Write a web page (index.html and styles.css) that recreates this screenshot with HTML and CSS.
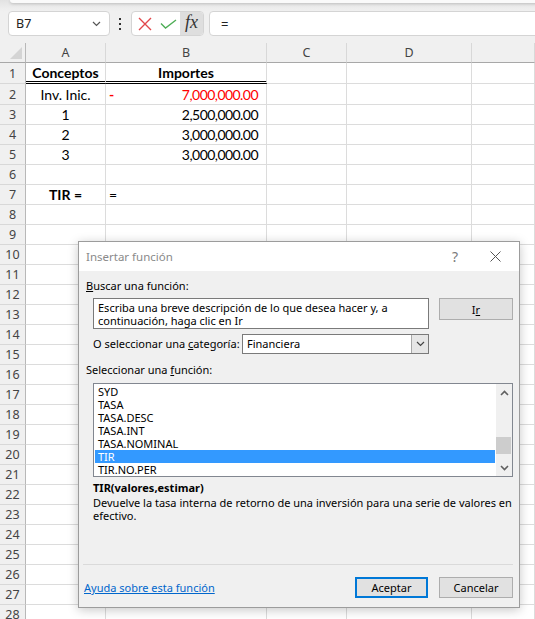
FILE: index.html
```html
<!DOCTYPE html>
<html lang="es">
<head>
<meta charset="utf-8">
<title>Insertar función</title>
<link rel="stylesheet" href="styles.css">
</head>
<body>
<div class="app">
  <div class="top">
    <div class="ribbon-edge"></div>
    <div class="fbar">
      <div class="namebox"><span>B7</span>
        <svg class="chev" width="9" height="6" viewBox="0 0 9 6"><path d="M1 1 L4.5 4.5 L8 1" fill="none" stroke="#555" stroke-width="1.2"/></svg>
      </div>
      <div class="dots"><i></i><i></i><i></i></div>
      <div class="fbtns">
        <span class="fb fb-x"><svg width="14" height="14" viewBox="0 0 14 14"><path d="M1 1 L13 13 M13 1 L1 13" stroke="#e2474b" stroke-width="1.4" fill="none"/></svg></span>
        <span class="fb fb-ok"><svg width="17" height="10" viewBox="0 0 17 10"><path d="M1 4.5 L5.5 9 L16 1" stroke="#4fae57" stroke-width="1.4" fill="none"/></svg></span>
        <span class="fb fb-fx">fx</span>
      </div>
      <div class="finput">=</div>
    </div>
  </div>

  <div class="grid">
    <div class="corner"><span class="tri"></span></div><div class="h">A</div><div class="h">B</div><div class="h">C</div><div class="h">D</div><div class="h"></div>

    <div class="n">1</div><div class="c ctr b dbl">Conceptos</div><div class="c ctr b dbl">Importes</div><div class="c"></div><div class="c"></div><div class="c"></div>
    <div class="n">2</div><div class="c ctr">Inv. Inic.</div><div class="c acct red"><span class="minus">-</span><span class="digits">7,000,000.00</span></div><div class="c"></div><div class="c"></div><div class="c"></div>
    <div class="n">3</div><div class="c ctr">1</div><div class="c num digits">2,500,000.00</div><div class="c"></div><div class="c"></div><div class="c"></div>
    <div class="n">4</div><div class="c ctr">2</div><div class="c num digits">3,000,000.00</div><div class="c"></div><div class="c"></div><div class="c"></div>
    <div class="n">5</div><div class="c ctr">3</div><div class="c num digits">3,000,000.00</div><div class="c"></div><div class="c"></div><div class="c"></div>
    <div class="n">6</div><div class="c"></div><div class="c"></div><div class="c"></div><div class="c"></div><div class="c"></div>
    <div class="n">7</div><div class="c ctr b">TIR =</div><div class="c lft">=</div><div class="c"></div><div class="c"></div><div class="c"></div>
    <div class="n">8</div><div class="c"></div><div class="c"></div><div class="c"></div><div class="c"></div><div class="c"></div>
    <div class="n">9</div><div class="c"></div><div class="c"></div><div class="c"></div><div class="c"></div><div class="c"></div>
    <div class="n">10</div><div class="c"></div><div class="c"></div><div class="c"></div><div class="c"></div><div class="c"></div>
    <div class="n">11</div><div class="c"></div><div class="c"></div><div class="c"></div><div class="c"></div><div class="c"></div>
    <div class="n">12</div><div class="c"></div><div class="c"></div><div class="c"></div><div class="c"></div><div class="c"></div>
    <div class="n">13</div><div class="c"></div><div class="c"></div><div class="c"></div><div class="c"></div><div class="c"></div>
    <div class="n">14</div><div class="c"></div><div class="c"></div><div class="c"></div><div class="c"></div><div class="c"></div>
    <div class="n">15</div><div class="c"></div><div class="c"></div><div class="c"></div><div class="c"></div><div class="c"></div>
    <div class="n">16</div><div class="c"></div><div class="c"></div><div class="c"></div><div class="c"></div><div class="c"></div>
    <div class="n">17</div><div class="c"></div><div class="c"></div><div class="c"></div><div class="c"></div><div class="c"></div>
    <div class="n">18</div><div class="c"></div><div class="c"></div><div class="c"></div><div class="c"></div><div class="c"></div>
    <div class="n">19</div><div class="c"></div><div class="c"></div><div class="c"></div><div class="c"></div><div class="c"></div>
    <div class="n">20</div><div class="c"></div><div class="c"></div><div class="c"></div><div class="c"></div><div class="c"></div>
    <div class="n">21</div><div class="c"></div><div class="c"></div><div class="c"></div><div class="c"></div><div class="c"></div>
    <div class="n">22</div><div class="c"></div><div class="c"></div><div class="c"></div><div class="c"></div><div class="c"></div>
    <div class="n">23</div><div class="c"></div><div class="c"></div><div class="c"></div><div class="c"></div><div class="c"></div>
    <div class="n">24</div><div class="c"></div><div class="c"></div><div class="c"></div><div class="c"></div><div class="c"></div>
    <div class="n">25</div><div class="c"></div><div class="c"></div><div class="c"></div><div class="c"></div><div class="c"></div>
    <div class="n">26</div><div class="c"></div><div class="c"></div><div class="c"></div><div class="c"></div><div class="c"></div>
    <div class="n">27</div><div class="c"></div><div class="c"></div><div class="c"></div><div class="c"></div><div class="c"></div>
    <div class="n">28</div><div class="c"></div><div class="c"></div><div class="c"></div><div class="c"></div><div class="c"></div>
  </div>

  <div class="dlg">
    <div class="dlg-title">
      <span class="dlg-name">Insertar función</span>
      <span class="dlg-help">?</span>
      <svg class="dlg-close" width="11" height="11" viewBox="0 0 11 11"><path d="M0.5 0.5 L10.5 10.5 M10.5 0.5 L0.5 10.5" stroke="#555" stroke-width="1" fill="none"/></svg>
    </div>
    <div class="dlg-body">
      <div class="lbl l1"><u>B</u>uscar una función:</div>
      <div class="row1">
        <div class="search">Escriba una breve descripción de lo que desea hacer y, a continuación, haga clic en Ir</div>
        <div class="btn go">I<u>r</u></div>
      </div>
      <div class="row2">
        <div class="lbl cat">O seleccionar una <u>c</u>ategoría:</div>
        <div class="select"><span class="sel-text">Financiera</span><span class="sel-arrow"><svg width="9" height="6" viewBox="0 0 9 6"><path d="M1 1 L4.5 4.5 L8 1" fill="none" stroke="#444" stroke-width="1.2"/></svg></span></div>
      </div>
      <div class="lbl l3">Seleccionar una <u>f</u>unción:</div>
      <div class="listbox">
        <div class="items">
          <div class="it">SYD</div>
          <div class="it">TASA</div>
          <div class="it">TASA.DESC</div>
          <div class="it">TASA.INT</div>
          <div class="it">TASA.NOMINAL</div>
          <div class="it sel">TIR</div>
          <div class="it">TIR.NO.PER</div>
        </div>
        <div class="sbar">
          <div class="sb-btn"><svg width="9" height="6" viewBox="0 0 9 6"><path d="M1 5 L4.5 1.5 L8 5" fill="none" stroke="#606060" stroke-width="1.6"/></svg></div>
          <div class="sb-track"><div class="sb-thumb"></div></div>
          <div class="sb-btn"><svg width="9" height="6" viewBox="0 0 9 6"><path d="M1 1 L4.5 4.5 L8 1" fill="none" stroke="#606060" stroke-width="1.6"/></svg></div>
        </div>
      </div>
      <div class="syntax">TIR(valores,estimar)</div>
      <div class="desc">Devuelve la tasa interna de retorno de una inversión para una serie de valores en efectivo.</div>
      <div class="sep"></div>
      <div class="foot">
        <a class="help">Ayuda sobre esta función</a>
        <div class="btns">
          <div class="btn ok">Aceptar</div>
          <div class="btn cancel">Cancelar</div>
        </div>
      </div>
    </div>
  </div>
</div>
</body>
</html>
```

FILE: styles.css
```css
* { box-sizing: border-box; }
html, body { margin: 0; padding: 0; }
body {
  width: 535px;
  height: 619px;
  overflow: hidden;
  background: #f0f0f0;
  font-family: "Noto Sans", "Open Sans", sans-serif;
}
.app {
  position: relative;
  width: 535px;
  height: 619px;
  overflow: hidden;
}

/* top / formula bar */
.top {
  height: 43px;
  background: linear-gradient(#e2e2e2 0px, #eeeeee 9px, #f0f0f0 12px);
}
.ribbon-edge {
  height: 3px;
  margin-left: 10px;
  margin-right: -10px;
  background: #fafafa;
  border-bottom-left-radius: 5px;
  box-shadow: 0 1px 3px rgba(0,0,0,0.18);
}
.fbar {
  display: flex;
  align-items: stretch;
  height: 25px;
  margin-top: 8px;
  padding-left: 8px;
}
.namebox {
  width: 102px;
  background: #fff;
  border: 1px solid #d4d4d4;
  border-radius: 4px;
  display: flex;
  align-items: center;
  justify-content: space-between;
  padding: 0 8px 0 7px;
  font-size: 12.5px;
  color: #222;
}
.dots {
  width: 20px;
  display: flex;
  flex-direction: column;
  align-items: center;
  justify-content: center;
  gap: 3px;
}
.dots i {
  display: block;
  width: 2px;
  height: 2px;
  background: #333;
}
.fbtns {
  width: 73px;
  margin-left: 1px;
  background: #fff;
  border: 1px solid #d4d4d4;
  border-radius: 4px;
  display: flex;
  overflow: hidden;
}
.fb {
  display: flex;
  align-items: center;
  justify-content: center;
}
.fb-x { width: 24px; padding-left: 1px; }
.fb-ok { width: 24px; }
.fb-fx {
  flex: 1;
  background: #dedede;
  font-family: "Liberation Serif", serif;
  font-style: italic;
  font-size: 18px;
  color: #333;
  padding-bottom: 2px;
}
.finput {
  flex: 1;
  margin-left: 5px;
  margin-right: -10px;
  background: #fff;
  border: 1px solid #d4d4d4;
  border-radius: 4px;
  padding-left: 11px;
  display: flex;
  align-items: center;
  font-size: 13px;
  color: #222;
}

/* grid */
.grid {
  display: grid;
  grid-template-columns: 26px 80px 161px 80px 125px 63px;
  grid-template-rows: 20px 21px 21px repeat(26, 20px);
  font-family: Lato, "Noto Sans", sans-serif;
  font-size: 14px;
  color: #000;
}
.corner {
  background: #f0f0f0;
  border-right: 1px solid #b8b8b8;
  border-bottom: 1px solid #a8a8a8;
  position: relative;
}
.tri {
  position: absolute;
  right: 3px;
  bottom: 3px;
  width: 0;
  height: 0;
  border-left: 12px solid transparent;
  border-bottom: 12px solid #d4d4d4;
}
.h {
  background: #f0f0f0;
  border-right: 1px solid #d8d8d8;
  border-bottom: 1px solid #a8a8a8;
  display: flex;
  align-items: center;
  justify-content: center;
  font-family: "Noto Sans", sans-serif;
  font-size: 12.5px;
  color: #444;
}
.n {
  background: #f0f0f0;
  border-right: 1px solid #b8b8b8;
  border-bottom: 1px solid #d8d8d8;
  display: flex;
  align-items: center;
  justify-content: center;
  font-family: "Noto Sans", sans-serif;
  font-size: 12.5px;
  color: #444;
}
.c {
  background: #fff;
  border-right: 1px solid #dcdcdc;
  border-bottom: 1px solid #dcdcdc;
  display: flex;
  align-items: center;
  white-space: nowrap;
}
.ctr { justify-content: center; }
.b { font-weight: bold; }
.dbl { border-bottom: 3px double #000; }
.num { justify-content: flex-end; padding-right: 8px; }
.digits { letter-spacing: -0.55px; }
.acct { justify-content: space-between; padding: 0 8px 0 3px; }
.minus { color: #ff0000; font-weight: bold; }
.lft { padding-left: 3px; }
.red { color: #ff0000; }

/* dialog */
.dlg {
  position: absolute;
  left: 78px;
  top: 241px;
  width: 442px;
  height: 367px;
  border: 1px solid #9c9c9c;
  background: #f0f0f0;
  box-shadow: 0 2px 10px rgba(0,0,0,0.22);
  font-size: 11px;
  color: #000;
  display: flex;
  flex-direction: column;
}
.dlg-title {
  height: 29px;
  background: #fff;
  display: flex;
  align-items: center;
  padding-left: 7px;
  font-size: 11.5px;
}
.dlg-name { color: #8a8a8a; flex: 1; }
.dlg-help {
  color: #7a7a7a;
  font-size: 14px;
  width: 20px;
  text-align: center;
}
.dlg-close { margin: 0 18px 0 25px; }
.dlg-body {
  flex: 1;
  padding: 0 6px 0 7px;
  display: flex;
  flex-direction: column;
}
.lbl { line-height: 16px; white-space: nowrap; }
.l1 { margin-top: 7px; }
.row1 {
  display: flex;
  align-items: flex-start;
  margin-top: 4px;
  margin-left: 7px;
}
.search {
  width: 336px;
  height: 31px;
  background: #fff;
  border: 1px solid #7a7a7a;
  padding: 2px 3px 0 4px;
  line-height: 13px;
}
.btn {
  height: 22px;
  background: #e1e1e1;
  border: 1px solid #adadad;
  display: flex;
  align-items: center;
  justify-content: center;
}
.go { width: 74px; margin-left: 10px; }
.row2 {
  display: flex;
  margin-top: 5px;
  margin-left: 7px;
  height: 20px;
}
.cat { width: 149px; line-height: 20px; }
.select {
  width: 187px;
  background: #fff;
  border: 1px solid #7a7a7a;
  display: flex;
}
.sel-text { flex: 1; padding-left: 4px; line-height: 18px; }
.sel-arrow {
  width: 17px;
  background: #e6e6e6;
  border-left: 1px solid #a8a8a8;
  display: flex;
  align-items: center;
  justify-content: center;
}
.l3 { margin-top: 8px; }
.listbox {
  margin-top: 5px;
  margin-left: 7px;
  width: 420px;
  height: 94px;
  background: #fff;
  border: 1px solid #828790;
  display: flex;
}
.items { flex: 1; padding: 1px 1px 0 1px; }
.it {
  height: 13px;
  line-height: 13px;
  padding-left: 3px;
  white-space: nowrap;
}
.it.sel { background: #3399ff; color: #fff; }
.sbar {
  width: 16px;
  background: #f0f0f0;
  display: flex;
  flex-direction: column;
}
.sb-btn {
  height: 17px;
  display: flex;
  align-items: center;
  justify-content: center;
}
.sb-track { flex: 1; position: relative; }
.sb-thumb {
  position: absolute;
  left: 0;
  right: 1px;
  top: 36px;
  height: 17px;
  background: #cdcdcd;
}
.syntax {
  margin-top: 3px;
  margin-left: 7px;
  line-height: 16px;
  font-weight: bold;
}
.desc {
  margin-left: 7px;
  width: 428px;
  line-height: 13px;
}
.sep {
  margin-top: 42px;
  margin-left: -3px;
  width: 430px;
  height: 1px;
  background: #dadada;
}
.foot {
  margin-top: 12px;
  display: flex;
  align-items: center;
  justify-content: space-between;
}
.help {
  color: #0066cc;
  text-decoration: underline;
  margin-left: -2px;
}
.btns { display: flex; gap: 11px; }
.ok { width: 73px; height: 21px; border: 2px solid #0078d7; }
.cancel { width: 74px; height: 21px; }
```
